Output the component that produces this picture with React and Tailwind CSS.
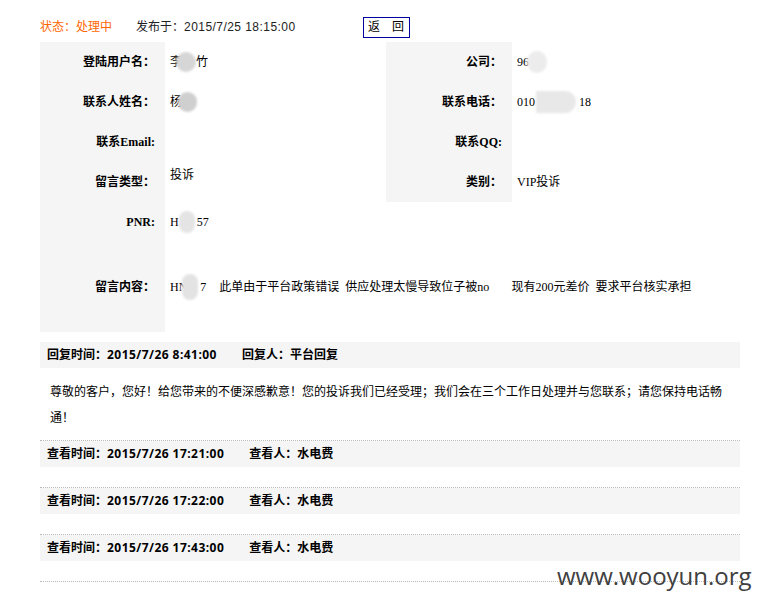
import React from 'react';

const Blob = ({ className }) => (
    <span className={`inline-block shrink-0 blur-[1px] ${className}`} />
);

const Label = ({ children }) => (
    <div className="h-[40px] flex items-center justify-end pr-[10px] bg-[#f5f5f5] font-bold">{children}</div>
);

const Value = ({ children, className = '' }) => (
    <div className={`h-[40px] flex items-center pl-[5px] ${className}`}>{children}</div>
);

const views = ['2015/7/26 17:21:00', '2015/7/26 17:22:00', '2015/7/26 17:43:00'];

export default function App() {
    return (
        <div className="relative min-h-[593px] w-[763px] bg-white text-black font-[family-name:'Liberation_Sans','Noto_Sans_CJK_SC',sans-serif]">
            <div className="ml-[40px] w-[700px]">
                {/* status bar */}
                <div className="flex items-center h-[30px] mt-[12px] text-[12px]">
                    <span className="w-[96px] text-[#ff6600]">状态：处理中</span>
                    <span className="w-[227px] text-[#222]">发布于：<span className="tracking-[0.45px]">2015/7/25 18:15:00</span></span>
                    <button className="h-[21px] w-[47px] border border-[#0000a0] bg-white pl-[4px] text-left text-[12px] leading-none">返　回</button>
                </div>

                {/* detail table */}
                <div className="grid grid-cols-[125px_221px_126px_228px] text-[12px] font-[family-name:'Liberation_Serif','Noto_Sans_CJK_SC',serif]">
                    <Label>登陆用户名：</Label>
                    <Value>
                        <span>李</span>
                        <Blob className="w-[20px] h-[20px] -ml-[6px] rounded-full bg-[#d6d6d6]" />
                        <span>竹</span>
                    </Value>
                    <Label>公司：</Label>
                    <Value>
                        <span>96</span>
                        <Blob className="w-[20px] h-[22px] -ml-[2px] rounded-full bg-[#ececec]" />
                    </Value>

                    <Label>联系人姓名：</Label>
                    <Value>
                        <span>杨</span>
                        <Blob className="w-[19px] h-[20px] -ml-[4px] rounded-full bg-[#cfcfcf]" />
                    </Value>
                    <Label>联系电话：</Label>
                    <Value>
                        <span>010</span>
                        <Blob className="w-[40px] h-[22px] ml-[1px] rounded-r-full bg-[#e8e8e8]" />
                        <span className="ml-[3px]">18</span>
                    </Value>

                    <Label>联系Email:</Label>
                    <Value />
                    <Label>联系QQ:</Label>
                    <Value />

                    <Label>留言类型：</Label>
                    <Value className="pb-[14px]">投诉</Value>
                    <Label>类别：</Label>
                    <Value>VIP投诉</Value>

                    <Label>PNR:</Label>
                    <Value className="col-span-3">
                        <span>H</span>
                        <Blob className="w-[16px] h-[22px] rounded-full bg-[#e4e4e4]" />
                        <span className="ml-[2px]">57</span>
                    </Value>

                    <div className="h-[90px] flex items-center justify-end pr-[10px] bg-[#f5f5f5] font-bold">留言内容：</div>
                    <div className="col-span-3 h-[90px] flex items-center pl-[5px]">
                        <span>HN</span>
                        <Blob className="w-[16px] h-[26px] -ml-[5px] rounded-full bg-[#e3e3e3]" />
                        <span className="ml-[2px]">7</span>
                        <span className="ml-[13px]">此单由于平台政策错误</span>
                        <span className="ml-[6px]">供应处理太慢导致位子被no</span>
                        <span className="ml-[22px]">现有200元差价</span>
                        <span className="ml-[6px]">要求平台核实承担</span>
                    </div>
                </div>

                {/* reply */}
                <div className="mt-[10px] text-[12px] font-[family-name:'Open_Sans','Noto_Sans_CJK_SC',sans-serif]">
                    <div className="h-[26px] flex items-center pl-[7px] bg-[#f5f5f5] font-bold">
                        <span>回复时间：<span className="tracking-[0.45px]">2015/7/26 8:41:00</span></span>
                        <span className="ml-[25px]">回复人：平台回复</span>
                    </div>
                    <p className="px-[10px] pt-[11px] pb-[9px] leading-[26px]">
                        尊敬的客户，您好！给您带来的不便深感歉意！您的投诉我们已经受理；我们会在三个工作日处理并与您联系；请您保持电话畅通！
                    </p>
                    {views.map(t => (
                        <div key={t} className="border-t border-dotted border-[#bbbbbb] pb-[20px]">
                            <div className="h-[26px] flex items-center pl-[7px] bg-[#f5f5f5] font-bold">
                                <span>查看时间：<span className="tracking-[0.45px]">{t}</span></span>
                                <span className="ml-[25px]">查看人：水电费</span>
                            </div>
                        </div>
                    ))}
                    <div className="border-t border-dotted border-[#bbbbbb]" />
                </div>
            </div>

            {/* watermark */}
            <div className="absolute left-[557px] top-[552px] text-[24px] leading-none text-[#404040] font-[family-name:'Open_Sans',sans-serif]">
                www.wooyun.org
            </div>
        </div>
    );
}
